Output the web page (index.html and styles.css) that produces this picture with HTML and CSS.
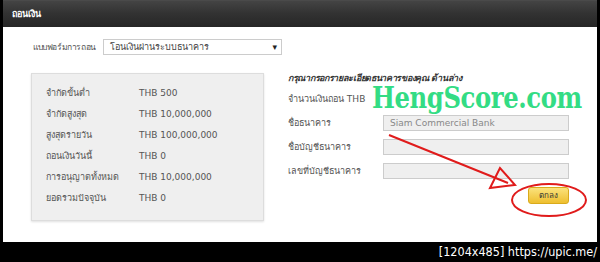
FILE: index.html
```html
<!DOCTYPE html>
<html lang="th">
<head>
  <meta charset="UTF-8">
  <meta name="viewport" content="width=device-width, initial-scale=1.0">
  <title>ถอนเงิน</title>
  <link rel="stylesheet" href="styles.css">
</head>
<body>
  <div class="frame">
    <div class="panel-head">ถอนเงิน</div>

    <div class="panel-body">
      <div class="method-row">
        <span class="method-label">แบบฟอร์มการถอน</span>
        <div class="select">
          <span>โอนเงินผ่านระบบธนาคาร</span>
          <span class="caret">▾</span>
        </div>
      </div>

      <div class="columns">
        <div class="limits">
          <div class="limit"><span class="limit-name">จำกัดขั้นต่ำ</span><span>THB 500</span></div>
          <div class="limit"><span class="limit-name">จำกัดสูงสุด</span><span>THB 10,000,000</span></div>
          <div class="limit"><span class="limit-name">สูงสุดรายวัน</span><span>THB 100,000,000</span></div>
          <div class="limit"><span class="limit-name">ถอนเงินวันนี้</span><span>THB 0</span></div>
          <div class="limit"><span class="limit-name">การอนุญาตทั้งหมด</span><span>THB 10,000,000</span></div>
          <div class="limit"><span class="limit-name">ยอดรวมปัจจุบัน</span><span>THB 0</span></div>
        </div>

        <form class="bank-form">
          <p class="hint">กรุณากรอกรายละเอียดธนาคารของคุณ ด้านล่าง</p>
          <div class="field"><label>จำนวนเงินถอน THB</label></div>
          <div class="field"><label>ชื่อธนาคาร</label><div class="input">Siam Commercial Bank</div></div>
          <div class="field"><label>ชื่อบัญชีธนาคาร</label><div class="input"></div></div>
          <div class="field"><label>เลขที่บัญชีธนาคาร</label><div class="input"></div></div>
          <div class="actions"><button type="button">ตกลง</button></div>
        </form>
      </div>

      <div class="watermark">HengScore.com</div>

      <svg class="markup" width="594" height="215" viewBox="0 0 594 215">
        <g fill="none" stroke="#e01b1b" stroke-width="2">
          <path d="M386 108 L505 156"/>
          <path d="M497 141 L487 161 L512 158 Z"/>
          <ellipse cx="546" cy="173" rx="37" ry="16"/>
        </g>
      </svg>
    </div>

    <div class="footer">[1204x485] https://upic.me/</div>
  </div>
</body>
</html>
```

FILE: styles.css
```css
html, body {
  margin: 0;
  background: #000;
}
body {
  font-family: Tahoma, "DejaVu Sans", sans-serif;
  font-size: 9px;
  color: #555;
  white-space: nowrap;
}
.frame {
  width: 594px;
  margin: 0 3px;
}
.panel-head {
  height: 27px;
  box-sizing: border-box;
  padding: 0 9px;
  line-height: 26px;
  color: #fff;
  font-weight: bold;
  font-size: 9px;
  border-top: 1px solid #4a4a4a;
  background: linear-gradient(#444 0%, #333 45%, #262626 100%);
}
.panel-body {
  position: relative;
  height: 215px;
  background: #fff;
  box-sizing: border-box;
  padding: 12px 0 0 28px;
}
.method-row {
  display: flex;
  align-items: center;
  height: 16px;
}
.method-label {
  width: 70px;
  padding-left: 2px;
  font-size: 8.5px;
  letter-spacing: -0.4px;
}
.select {
  width: 179px;
  height: 16px;
  box-sizing: border-box;
  border: 1px solid #ccc;
  display: flex;
  align-items: center;
  justify-content: space-between;
  padding: 0 4px 0 6px;
  color: #444;
}
.caret {
  font-size: 9px;
  color: #222;
}
.columns {
  display: flex;
  margin-top: 18px;
}
.limits {
  width: 233px;
  height: 148px;
  box-sizing: border-box;
  background: #efefef;
  border: 1px solid #ddd;
  box-shadow: 0 1px 2px rgba(0, 0, 0, 0.12);
  padding: 8px 0 0 14px;
}
.limit {
  display: flex;
  align-items: center;
  height: 21px;
}
.limit-name {
  width: 93px;
}
.bank-form {
  margin: 0 0 0 24px;
  width: 281px;
}
.hint {
  margin: -1px 0 1px;
  height: 14px;
  line-height: 12px;
  font-style: italic;
  font-weight: bold;
  color: #333;
  letter-spacing: -0.3px;
}
.field {
  display: flex;
  align-items: center;
  height: 24px;
}
.field label {
  width: 95px;
}
.input {
  flex: 1;
  height: 16px;
  box-sizing: border-box;
  border: 1px solid #ccc;
  background: #efefef;
  padding-left: 6px;
  line-height: 14px;
  color: #888;
}
.actions {
  display: flex;
  justify-content: flex-end;
  margin-top: 4px;
}
.actions button {
  width: 41px;
  height: 17px;
  border: 1px solid #d9aa1c;
  border-radius: 3px;
  background: linear-gradient(#fbe27c, #eebf2f);
  font-family: inherit;
  font-size: 8px;
  color: #333;
  padding: 0;
}
.watermark {
  position: absolute;
  left: 369px;
  top: 60px;
  line-height: 22px;
  font-family: "DejaVu Serif", serif;
  font-weight: bold;
  font-size: 30px;
  letter-spacing: -0.5px;
  color: #33dc84;
  transform: scaleX(0.81);
  transform-origin: left top;
}
.markup {
  position: absolute;
  left: 0;
  top: 0;
  pointer-events: none;
}
.footer {
  height: 20px;
  line-height: 20px;
  text-align: right;
  color: #fff;
  font-family: "DejaVu Sans Condensed", "DejaVu Sans", sans-serif;
  font-size: 12.5px;
}
```
